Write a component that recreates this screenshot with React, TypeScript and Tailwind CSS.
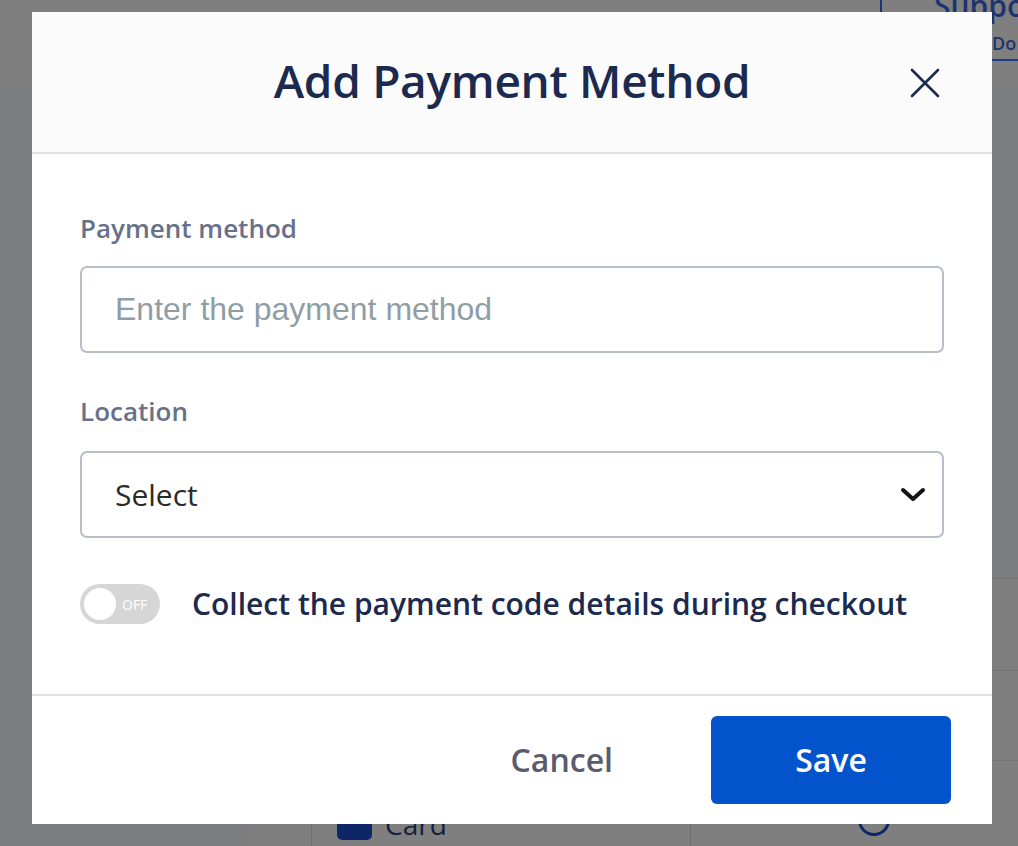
import { useState } from "react";

const uiFont = { fontFamily: '"Open Sans", "Noto Sans", sans-serif' };

function CloseIcon() {
  return (
    <svg width="32" height="32" viewBox="0 0 32 32" fill="none" stroke="#1b2a4e" strokeWidth="2.6" strokeLinecap="round">
      <path d="M3 3 L29 29 M29 3 L3 29" />
    </svg>
  );
}

function ChevronDown() {
  return (
    <svg width="26" height="16" viewBox="0 0 26 16" fill="none" stroke="#111111" strokeWidth="4" strokeLinecap="round" strokeLinejoin="round">
      <path d="M3 3 L13 12 L23 3" />
    </svg>
  );
}

function BackgroundPage() {
  return (
    <div className="flex h-full flex-col">
      <div className="flex h-[88px] shrink-0 bg-[#7f7f7f]">
        <div className="flex-1" />
        <div className="flex w-[138px] flex-col border-l-2 border-[#1d3470]">
          <div className="-mt-[14px] pl-[52px] text-[30px] font-semibold leading-[40px] text-[#1d3470]" style={uiFont}>
            Suppo
          </div>
          <div className="ml-[110px] mt-[4px] border-b-2 border-[#1d3c8a] pb-[2px] text-[18px] font-semibold text-[#1d3470]" style={uiFont}>
            Do
          </div>
        </div>
      </div>
      <div className="flex flex-1">
        <div className="w-[247px] bg-[#7b7c80]" />
        <div className="flex flex-1 flex-col bg-[#7c7d7f]">
          <div className="flex-1" />
          <div className="h-[92px] border-t border-[#727272] bg-[#7e7e7e]" />
          <div className="h-[90px] border-t border-[#747474] bg-[#7e7e7e]" />
          <div className="flex h-[86px] border-t border-[#767676] bg-[#7f7f7f]">
            <div className="w-[64px]" />
            <div className="flex w-[379px] items-end gap-[13px] border-l border-[#6f6f6f] pb-[6px] pl-[25px]">
              <div className="h-[32px] w-[35px] rounded-[5px] bg-[#0d2766]" />
              <span className="text-[28px] leading-[32px] text-[#16203a]" style={uiFont}>
                Card
              </span>
            </div>
            <div className="flex flex-1 items-end justify-center border-l border-[#6f6f6f] pb-[10px] pl-[38px]">
              <div className="h-[32px] w-[32px] rounded-full border-[3px] border-[#0d2766]" />
            </div>
          </div>
        </div>
      </div>
    </div>
  );
}

export default function App() {
  const [method, setMethod] = useState("");
  const [collect, setCollect] = useState(false);

  return (
    <div className="relative h-[846px] w-[1018px] overflow-hidden bg-[#7f7f7f]" style={uiFont}>
      <BackgroundPage />

      <div className="absolute left-[32px] top-[12px] flex h-[812px] w-[960px] flex-col bg-white">
        <div className="relative flex h-[142px] shrink-0 items-center justify-center border-b-2 border-[#e2e2e6] bg-[#fbfbfc]">
          <h2 className="-mt-[4px] text-[46px] font-semibold leading-[60px] tracking-[-0.3px] text-[#1b2a4e]">Add Payment Method</h2>
          <button type="button" className="absolute right-[51px] top-[55px]">
            <CloseIcon />
          </button>
        </div>

        <div className="flex flex-1 flex-col px-[48px] pt-[58px]">
          <label className="text-[26px] font-semibold leading-[32px] text-[#68718a]">Payment method</label>
          <input
            value={method}
            onChange={(event) => setMethod(event.target.value)}
            placeholder="Enter the payment method"
            className="mt-[22px] h-[87px] w-full rounded-[7px] border-2 border-[#b9bdc9] px-[33px] text-[32px] text-[#222] outline-none placeholder:text-[#8f9da5]"
            style={{ fontFamily: '"Liberation Sans", Arial, sans-serif' }}
          />

          <label className="mt-[42px] text-[26px] font-semibold leading-[32px] text-[#68718a]">Location</label>
          <div className="mt-[24px] flex h-[87px] w-full items-center justify-between rounded-[7px] border-2 border-[#b9bdc9] pl-[33px] pr-[16px]">
            <span className="text-[30px] text-[#2b2b2b]">Select</span>
            <ChevronDown />
          </div>

          <div className="mt-[46px] flex items-center gap-[32px]">
            <button
              type="button"
              onClick={() => setCollect(!collect)}
              className="relative flex h-[40px] w-[80px] shrink-0 items-center rounded-full bg-[#d6d6d6] pl-[4px]"
            >
              <span className="h-[32px] w-[32px] rounded-full bg-white" />
              <span className="ml-[6px] text-[14px] font-medium text-white">OFF</span>
            </button>
            <span className="text-[30px] font-semibold leading-[40px] text-[#1b2a4e]">
              Collect the payment code details during checkout
            </span>
          </div>
        </div>

        <div className="flex h-[130px] shrink-0 items-center justify-end border-t-2 border-[#e2e2e6] pr-[41px]">
          <button type="button" className="mr-[98px] text-[32px] font-semibold text-[#5a5c6c]">
            Cancel
          </button>
          <button type="button" className="h-[88px] w-[240px] rounded-[6px] bg-[#0353cc] text-[32px] font-semibold text-white">
            Save
          </button>
        </div>
      </div>
    </div>
  );
}
